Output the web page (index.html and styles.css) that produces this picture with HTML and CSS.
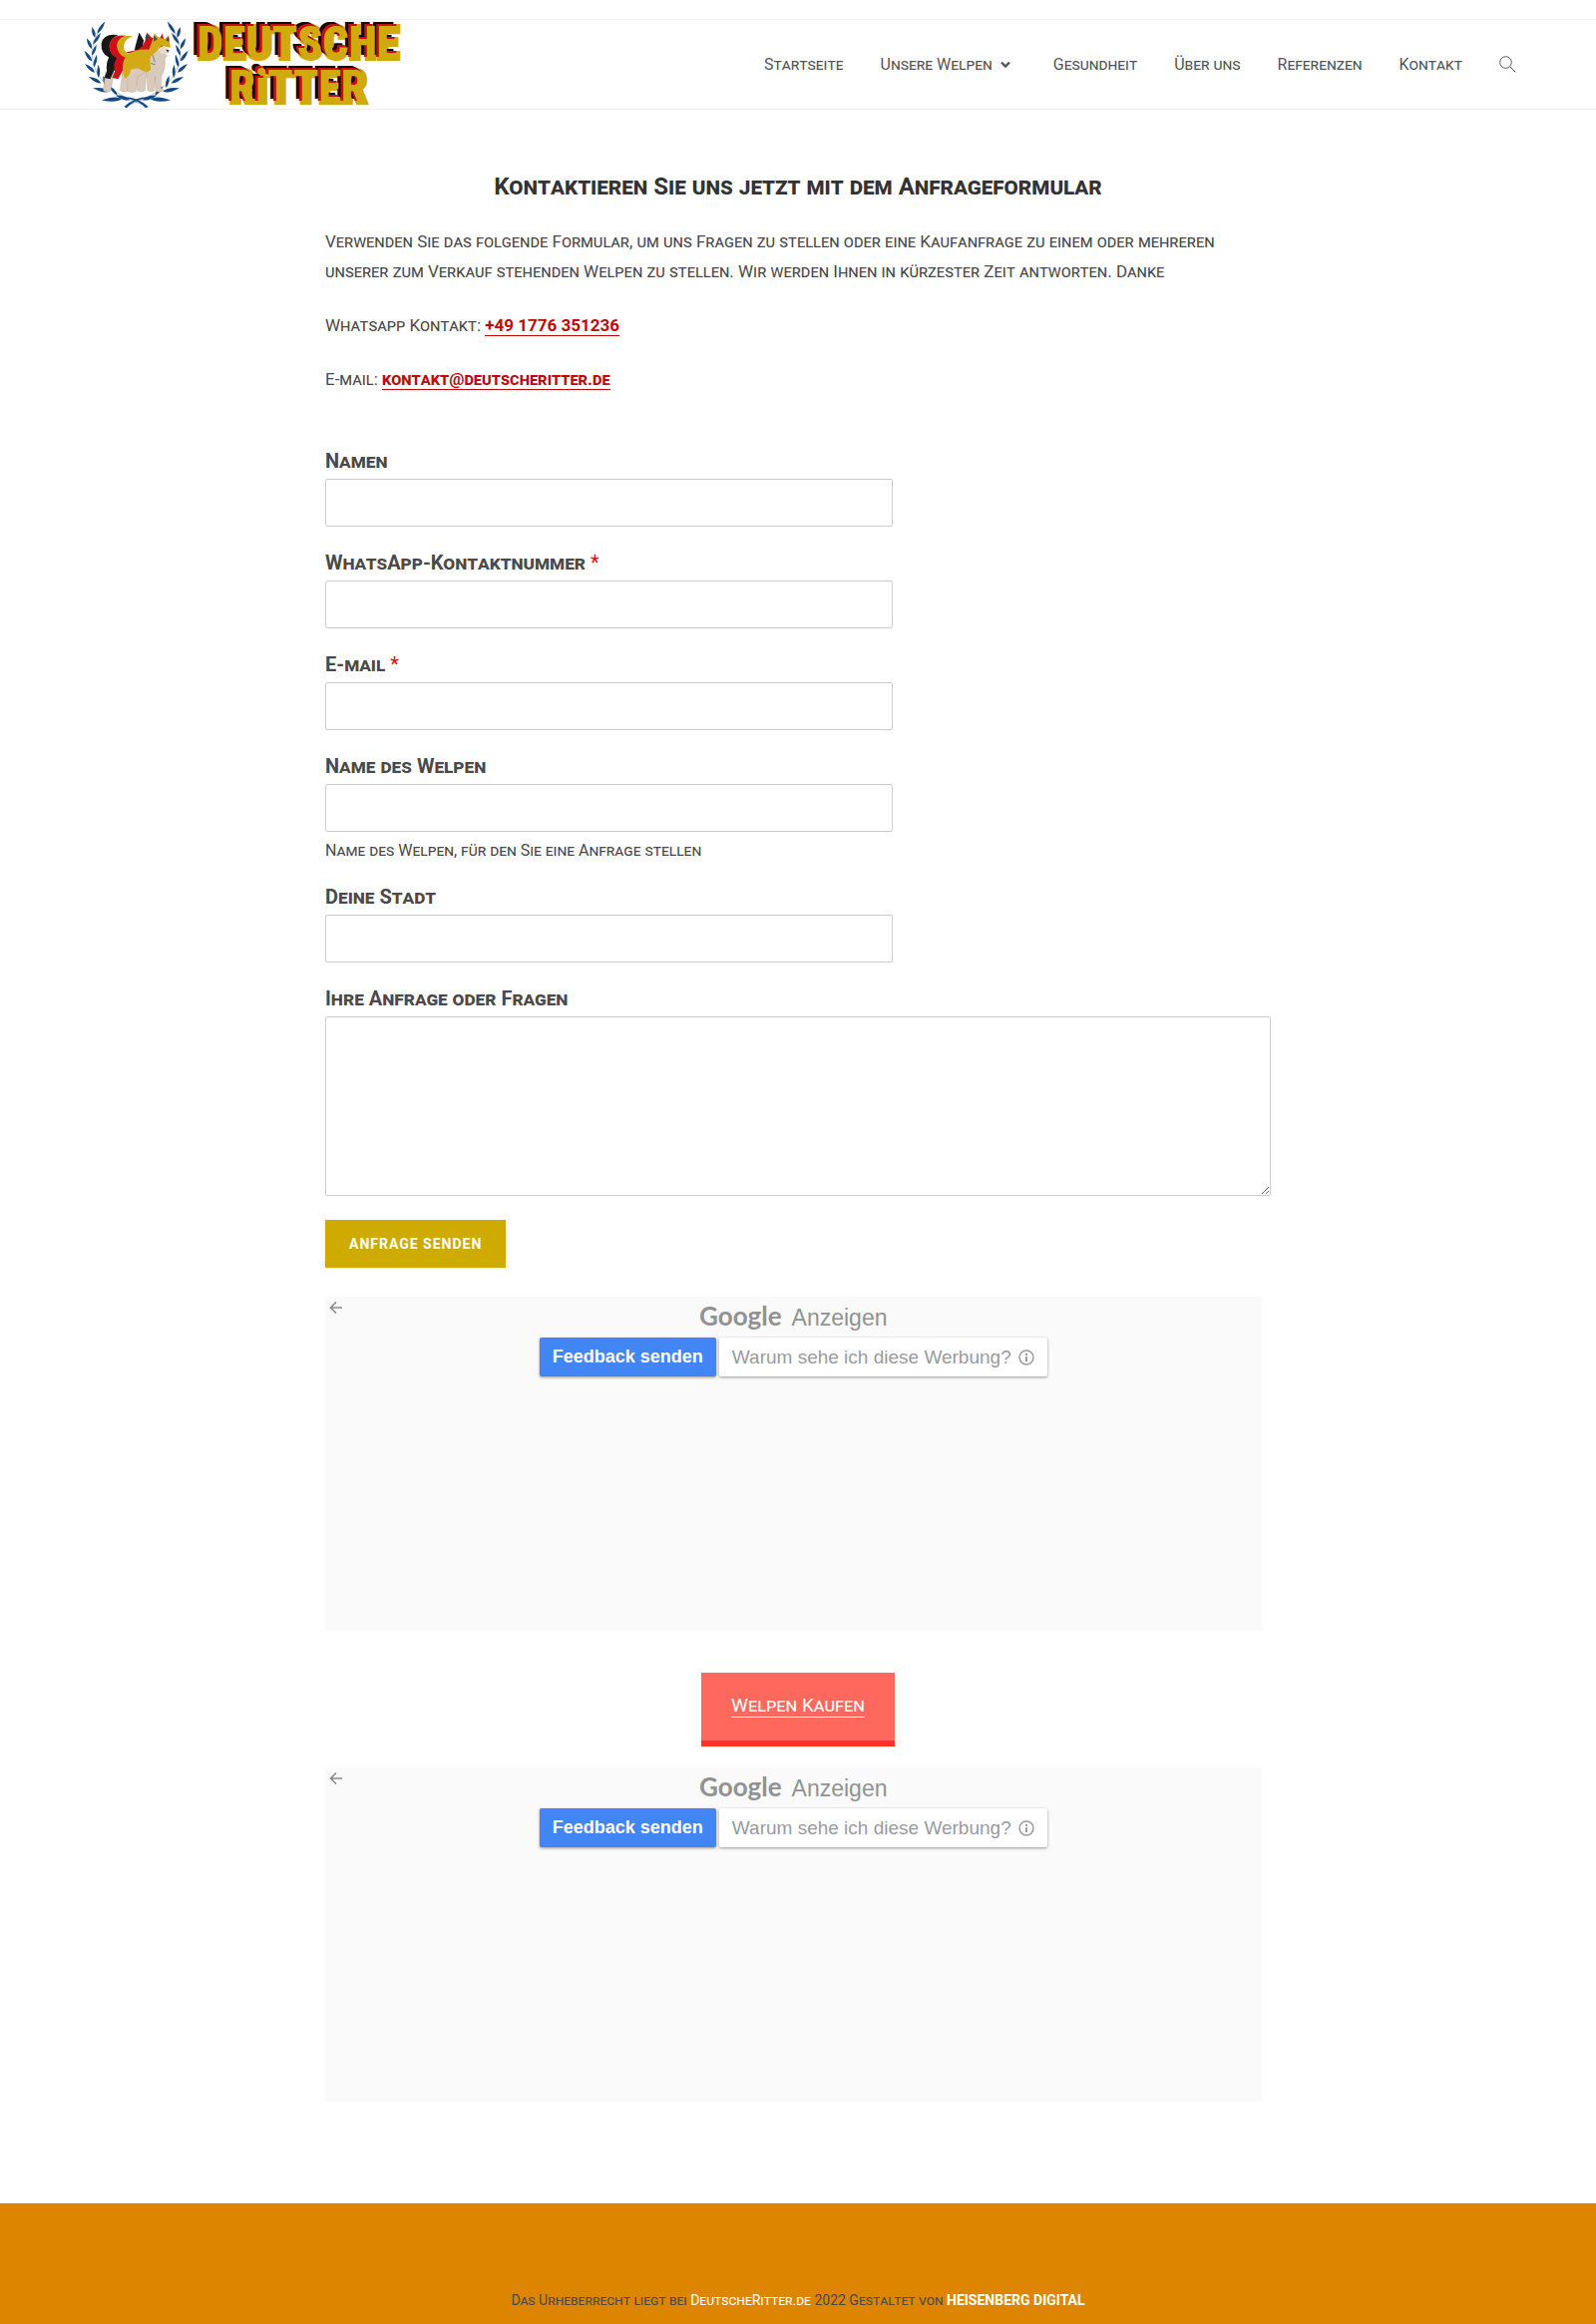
FILE: index.html
```html
<!DOCTYPE html>
<html lang="de">
<head>
  <meta charset="UTF-8">
  <meta name="viewport" content="width=device-width, initial-scale=1.0">
  <title>Kontakt - Deutsche Ritter</title>
  <link rel="stylesheet" href="styles.css">
</head>
<body>

  <!-- shared icons -->
  <svg class="sprite" aria-hidden="true">
    <symbol id="arrow" viewBox="0 0 16 16">
      <path d="M8 2.500 2.500 8l5.500 5.500M2.500 8h11.500" fill="none" stroke="#8a8a8a" stroke-width="1.600"/>
    </symbol>
    <symbol id="info" viewBox="0 0 16 16">
      <circle cx="8" cy="8" r="7" fill="none" stroke="#9a9aa0" stroke-width="1.500"/>
      <path d="M7 4h2v2H7zM7 7h2v5H7z" fill="#9a9aa0"/>
    </symbol>
  </svg>

  <header class="site-header">
    <div class="header-inner">
      <a class="logo" href="#">
        <svg class="emblem" viewBox="70 58 322 270" aria-hidden="true">
          <g id="branch" fill="#134a86">
            <path d="M118 92 Q80 150 108 212 Q140 278 258 318" fill="none" stroke="#134a86" stroke-width="1"/>
            <g transform="translate(112 100) rotate(-52)"><path d="M0 0Q14-10 44-4Q20 8 0 0Z"/></g>
            <g transform="translate(106 112) rotate(-102)"><path d="M0 0Q12-10 34-2Q14 8 0 0Z"/></g>
            <g transform="translate(100 132) rotate(-52)"><path d="M0 0Q14-9 42-3Q18 8 0 0Z"/></g>
            <g transform="translate(96 146) rotate(-112)"><path d="M0 0Q12-10 36-2Q14 9 0 0Z"/></g>
            <g transform="translate(96 166) rotate(-62)"><path d="M0 0Q14-9 36-3Q16 8 0 0Z"/></g>
            <g transform="translate(96 184) rotate(-122)"><path d="M0 0Q12-10 40-2Q14 10 0 0Z"/></g>
            <g transform="translate(102 202) rotate(-72)"><path d="M0 0Q14-9 40-3Q16 8 0 0Z"/></g>
            <g transform="translate(105 218) rotate(-136)"><path d="M0 0Q12-10 40-2Q14 10 0 0Z"/></g>
            <g transform="translate(116 234) rotate(-86)"><path d="M0 0Q14-9 40-3Q16 9 0 0Z"/></g>
            <g transform="translate(124 250) rotate(-150)"><path d="M0 0Q12-10 42-2Q14 11 0 0Z"/></g>
            <g transform="translate(140 264) rotate(-100)"><path d="M0 0Q14-9 38-3Q16 9 0 0Z"/></g>
            <g transform="translate(150 276) rotate(-166)"><path d="M0 0Q16-12 52-2Q18 12 0 0Z"/></g>
            <g transform="translate(174 288) rotate(-126)"><path d="M0 0Q14-9 38-3Q16 9 0 0Z"/></g>
            <g transform="translate(188 298) rotate(178)"><path d="M0 0Q18-13 62-2Q20 12 0 0Z"/></g>
            <g transform="translate(212 302) rotate(-158)"><path d="M0 0Q16-10 46-3Q18 10 0 0Z"/></g>
            <path d="M268 292 Q225 292 194 322 L202 326 Q224 300 268 296Z"/>
          </g>
          <use href="#branch" transform="translate(462 0) scale(-1 1)"/>

          <g fill="#d9cabb" stroke="#a3968a" stroke-width="1">
            <path d="M138 215 L131 272 Q138 280 153 274 L162 230 L190 215 L182 272 Q190 280 204 274 L214 225Z"/>
            <path d="M228 210 L234 272 Q242 280 258 272 L262 215Z"/>
          </g>
          <g fill="#171717">
            <path d="M176 104 Q132 98 125 130 Q124 162 148 172 Q138 192 142 214 L134 234 L152 238 L164 212 L186 192 L168 168 Q150 160 150 138 Q152 112 176 104Z"/>
            <path d="M230 132 L240 96 L254 120 L248 154 L226 150Z"/>
          </g>
          <g fill="#cf1018">
            <path d="M200 106 Q152 100 149 138 Q150 164 172 174 Q160 194 166 214 L158 234 L176 238 L190 212 L215 190 L195 166 Q174 158 174 136 Q178 114 200 106Z"/>
            <path d="M194 158 L236 148 L250 138 L258 122 L264 97 L278 112 L304 112 L311 99 L316 122 L270 160Z"/>
          </g>
          <path d="M258 112 L264 98 L270 112 L264 124Z" fill="#444"/>
          <path d="M206 205 L204 274 Q214 282 230 275 L234 232 L262 214 L266 272 Q276 280 286 273 L289 230 L290 274 Q302 281 318 272 L306 266 L308 228 Q322 204 318 176 L326 166 L296 150 L270 165 L272 200Z" fill="#d9cabb" stroke="#a3968a" stroke-width="1"/>
          <path d="M222 108 Q182 98 172 132 Q172 162 198 172 Q188 190 190 208 Q190 228 198 236 Q212 228 214 210 Q232 200 250 212 Q270 222 276 206 Q270 180 276 168 L298 148 L314 138 L336 142 L332 124 L330 104 L318 116 L300 112 L286 99 L280 122 L270 148 Q230 146 206 162 Q190 150 194 132 Q200 112 222 108Z" fill="#d3aa13"/>
          <path d="M284 104 L296 116 L285 124ZM330 107 L332 124 L321 120Z" fill="#4d4d46"/>
          <path d="M298 147 Q310 136 324 142 L332 150 Q330 164 312 162 Q300 160 298 147Z" fill="#e6dccd"/>
          <path d="M321 148 L331 150 L328 157Z" fill="#333"/>
          <path d="M305 139 L311 137M281 164L288 186M276 190L289 194" stroke="#555" stroke-width="2"/>
        </svg>
        <span class="wordmark">
          <span>DEUTSCHE</span>
          <span class="wordmark-second">RiTTER</span>
        </span>
      </a>

      <nav class="main-nav">
        <a href="#">Startseite</a>
        <a href="#" class="has-menu">Unsere Welpen
          <svg class="chevron" viewBox="0 0 10 8" aria-hidden="true"><path d="M1 1.500 5 5.500l4-4" fill="none" stroke="#555" stroke-width="2.400"/></svg>
        </a>
        <a href="#">Gesundheit</a>
        <a href="#">Über uns</a>
        <a href="#">Referenzen</a>
        <a href="#">Kontakt</a>
        <a href="#" aria-label="Suche">
          <svg class="search" viewBox="0 0 17 17" aria-hidden="true"><circle cx="6.500" cy="6.500" r="5.800"/><path d="M10.800 10.800 16.300 16.300"/></svg>
        </a>
      </nav>
    </div>
  </header>

  <main class="content">
    <h1>Kontaktieren Sie uns jetzt mit dem Anfrageformular</h1>
    <p>Verwenden Sie das folgende Formular, um uns Fragen zu stellen oder eine Kaufanfrage zu einem oder mehreren unserer zum Verkauf stehenden Welpen zu stellen. Wir werden Ihnen in kürzester Zeit antworten. Danke</p>
    <p>Whatsapp Kontakt: <a href="#">+49 1776 351236</a></p>
    <p>E-mail: <a href="#">kontakt@deutscheritter.de</a></p>

    <form class="form">
      <div class="field">
        <label for="name">Namen</label>
        <input type="text" id="name">
      </div>
      <div class="field">
        <label for="phone">WhatsApp-Kontaktnummer <span class="required">*</span></label>
        <input type="text" id="phone">
      </div>
      <div class="field">
        <label for="email">E-mail <span class="required">*</span></label>
        <input type="email" id="email">
      </div>
      <div class="field">
        <label for="puppy">Name des Welpen</label>
        <input type="text" id="puppy">
        <div class="description">Name des Welpen, für den Sie eine Anfrage stellen</div>
      </div>
      <div class="field">
        <label for="city">Deine Stadt</label>
        <input type="text" id="city">
      </div>
      <div class="field">
        <label for="message">Ihre Anfrage oder Fragen</label>
        <textarea id="message"></textarea>
      </div>
      <button type="submit" class="submit">Anfrage senden</button>
    </form>

    <section class="ad">
      <button class="ad-back" aria-label="Zurück"><svg viewBox="0 0 16 16"><use href="#arrow"/></svg></button>
      <div class="ad-title"><span class="google">Google</span> Anzeigen</div>
      <div class="ad-buttons">
        <button class="ad-feedback">Feedback senden</button>
        <button class="ad-why">Warum sehe ich diese Werbung? <svg viewBox="0 0 16 16"><use href="#info"/></svg></button>
      </div>
    </section>

    <a class="buy" href="#"><span>Welpen Kaufen</span></a>

    <section class="ad">
      <button class="ad-back" aria-label="Zurück"><svg viewBox="0 0 16 16"><use href="#arrow"/></svg></button>
      <div class="ad-title"><span class="google">Google</span> Anzeigen</div>
      <div class="ad-buttons">
        <button class="ad-feedback">Feedback senden</button>
        <button class="ad-why">Warum sehe ich diese Werbung? <svg viewBox="0 0 16 16"><use href="#info"/></svg></button>
      </div>
    </section>
  </main>

  <footer class="site-footer">
    Das Urheberrecht liegt bei <a href="#">DeutscheRitter.de</a> 2022 Gestaltet von <a href="#" class="agency">Heisenberg Digital</a>
  </footer>

</body>
</html>
```

FILE: styles.css
```css
* {
  box-sizing: border-box;
  margin: 0;
  padding: 0;
}

body {
  background: #fff;
  color: #4a4a4a;
  font-family: Roboto, "Open Sans", sans-serif;
  font-size: 17px;
  line-height: 30px;
  font-variant: small-caps;
}

a {
  color: inherit;
  text-decoration: none;
}

.sprite {
  display: none;
}

/* header */
.site-header {
  margin-top: 19px;
  border-top: 1px solid #f1f1f1;
  border-bottom: 1px solid #f1f1f1;
}

.header-inner {
  display: flex;
  justify-content: space-between;
  align-items: center;
  width: 90%;
  margin: 0 auto;
}

.logo {
  display: flex;
  align-items: center;
  gap: 8px;
  height: 89px;
  padding-left: 3px;
}

.emblem {
  width: 107px;
  height: 89px;
}

.wordmark {
  display: flex;
  flex-direction: column;
  font-family: "Roboto Condensed", Roboto, sans-serif;
  font-variant: normal;
  font-size: 46px;
  font-weight: 900;
  line-height: 44px;
  color: #d0a90c;
  -webkit-text-stroke: 4px #d0a90c;
  paint-order: stroke fill;
  text-shadow: -2px -2px 0 #c90c0f, -3px -2px 0 #c90c0f, -5px -4px 0 #0b0b0b, -6px -4px 0 #0b0b0b;
}

.wordmark-second {
  text-align: center;
}

.main-nav {
  display: flex;
  align-items: center;
  gap: 37px;
  font-size: 16px;
  color: #555;
}

.has-menu {
  display: flex;
  align-items: center;
  gap: 8px;
  padding-right: 6px;
}

.chevron {
  width: 10px;
  height: 8px;
}

.search {
  display: block;
  width: 17px;
  height: 17px;
  fill: none;
  stroke: #555;
}

/* content */
.content {
  width: 948px;
  max-width: 90%;
  margin: 0 auto;
  padding: 60px 0 102px;
}

h1 {
  margin-bottom: 23px;
  color: #333;
  font-size: 24px;
  font-weight: bold;
  line-height: 34px;
  text-align: center;
}

p {
  margin-bottom: 24px;
}

p a {
  color: #c00a0a;
  font-weight: bold;
  border-bottom: 1px solid #c00a0a;
}

.form {
  padding-top: 29px;
  margin-bottom: 29px;
}

.field {
  margin-bottom: 22px;
}

.field label {
  display: block;
  margin-bottom: 4px;
  font-size: 20px;
  font-weight: bold;
  line-height: 28px;
}

.required {
  color: #f00;
  font-weight: normal;
}

input,
textarea {
  display: block;
  width: 60%;
  height: 48px;
  padding: 6px 12px;
  background: #fff;
  border: 1px solid #ccc;
  border-radius: 2px;
  font: inherit;
}

textarea {
  width: 100%;
  height: 180px;
  resize: vertical;
}

.description {
  padding-top: 8px;
  font-size: 16px;
  line-height: 21px;
}

.submit {
  display: block;
  height: 48px;
  margin-top: 24px;
  padding: 0 24px;
  background: #cfaa00;
  border: none;
  color: #fff;
  font-family: inherit;
  font-size: 14px;
  font-weight: bold;
  letter-spacing: 1px;
  text-transform: uppercase;
}

/* ad blocks */
.ad {
  position: relative;
  width: 99%;
  height: 335px;
  background: #fafafa;
  font-family: "Liberation Sans", Arial, sans-serif;
  font-variant: normal;
}

.ad-back {
  position: absolute;
  top: 3px;
  left: 3px;
  width: 16px;
  height: 16px;
  background: none;
  border: none;
}

.ad-back svg {
  display: block;
}

.ad-title {
  display: flex;
  justify-content: center;
  align-items: baseline;
  gap: 10px;
  padding-top: 1px;
  color: #929292;
  font-size: 23px;
  line-height: 36px;
}

.google {
  font-family: Lato, sans-serif;
  font-size: 26px;
  font-weight: bold;
}

.ad-buttons {
  display: flex;
  justify-content: center;
  gap: 3px;
  padding-top: 2px;
}

.ad-buttons button {
  display: flex;
  align-items: center;
  gap: 7px;
  height: 39px;
  padding: 0 13px;
  border: none;
  border-radius: 2px;
  box-shadow: 0 1px 3px rgba(0, 0, 0, 0.4);
  font-family: inherit;
}

.ad-buttons .ad-feedback {
  background: #4285f4;
  color: #fff;
  font-size: 18px;
  font-weight: bold;
}

.ad-buttons .ad-why {
  background: #fff;
  color: #9a9aa0;
  font-size: 19px;
}

.ad-why svg {
  width: 16px;
  height: 16px;
}

.buy {
  display: block;
  width: fit-content;
  margin: 42px auto 21px;
  padding: 18px 30px 20px;
  background: #ff685d;
  border-bottom: 6px solid #ff3324;
  color: #fff;
  font-size: 19px;
}

.buy span {
  border-bottom: 1px solid #fff;
}

/* footer */
.site-footer {
  padding: 82px 20px 9px;
  background: #dd8500;
  color: #4a4a4a;
  font-size: 14px;
  text-align: center;
}

.site-footer a {
  color: #fff;
}

.site-footer .agency {
  font-weight: bold;
  text-transform: uppercase;
}
```
